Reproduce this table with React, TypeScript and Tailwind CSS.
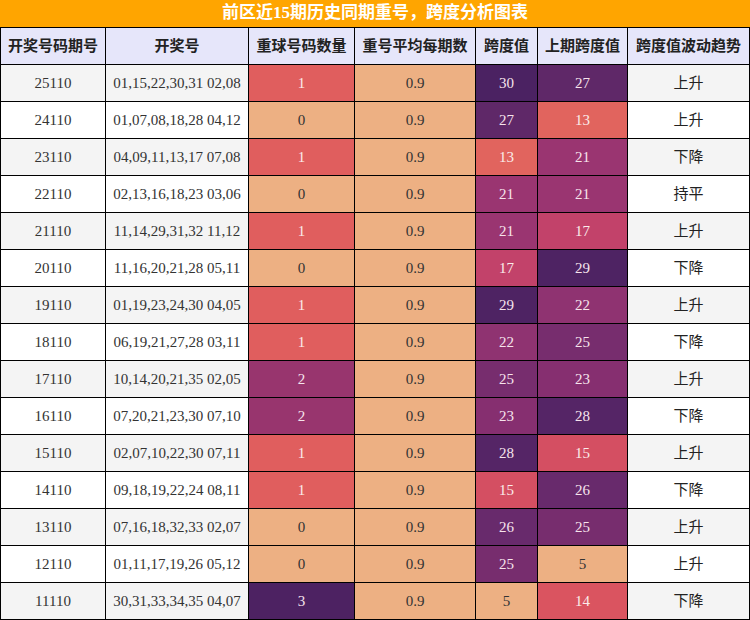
import React from "react";

type Row = {
  issue: string;
  nums: string;
  repeat: number;
  span: number;
  prev: number;
  trend: string;
};

const rows: Row[] = [
  { issue: "25110", nums: "01,15,22,30,31 02,08", repeat: 1, span: 30, prev: 27, trend: "上升" },
  { issue: "24110", nums: "01,07,08,18,28 04,12", repeat: 0, span: 27, prev: 13, trend: "上升" },
  { issue: "23110", nums: "04,09,11,13,17 07,08", repeat: 1, span: 13, prev: 21, trend: "下降" },
  { issue: "22110", nums: "02,13,16,18,23 03,06", repeat: 0, span: 21, prev: 21, trend: "持平" },
  { issue: "21110", nums: "11,14,29,31,32 11,12", repeat: 1, span: 21, prev: 17, trend: "上升" },
  { issue: "20110", nums: "11,16,20,21,28 05,11", repeat: 0, span: 17, prev: 29, trend: "下降" },
  { issue: "19110", nums: "01,19,23,24,30 04,05", repeat: 1, span: 29, prev: 22, trend: "上升" },
  { issue: "18110", nums: "06,19,21,27,28 03,11", repeat: 1, span: 22, prev: 25, trend: "下降" },
  { issue: "17110", nums: "10,14,20,21,35 02,05", repeat: 2, span: 25, prev: 23, trend: "上升" },
  { issue: "16110", nums: "07,20,21,23,30 07,10", repeat: 2, span: 23, prev: 28, trend: "下降" },
  { issue: "15110", nums: "02,07,10,22,30 07,11", repeat: 1, span: 28, prev: 15, trend: "上升" },
  { issue: "14110", nums: "09,18,19,22,24 08,11", repeat: 1, span: 15, prev: 26, trend: "下降" },
  { issue: "13110", nums: "07,16,18,32,33 02,07", repeat: 0, span: 26, prev: 25, trend: "上升" },
  { issue: "12110", nums: "01,11,17,19,26 05,12", repeat: 0, span: 25, prev: 5, trend: "上升" },
  { issue: "11110", nums: "30,31,33,34,35 04,07", repeat: 3, span: 5, prev: 14, trend: "下降" },
];

const peach = "bg-[#edb083] text-[#333]";

const spanColor: Record<number, string> = {
  5: peach,
  13: "bg-[#e1645e] text-[#fbecea]",
  14: "bg-[#da5460] text-[#fbecea]",
  15: "bg-[#d44f62] text-[#fbecea]",
  17: "bg-[#c2426a] text-[#fbecea]",
  21: "bg-[#9a3571] text-[#f6e4ec]",
  22: "bg-[#8f3371] text-[#f6e4ec]",
  23: "bg-[#862f70] text-[#f6e4ec]",
  25: "bg-[#772d6e] text-[#f6e4ec]",
  26: "bg-[#682a6c] text-[#f6e4ec]",
  27: "bg-[#5f2868] text-[#f6e4ec]",
  28: "bg-[#552566] text-[#f6e4ec]",
  29: "bg-[#4e2363] text-[#f6e4ec]",
  30: "bg-[#4b2262] text-[#f6e4ec]",
};

const repeatColor: Record<number, string> = {
  0: peach,
  1: "bg-[#e05e5e] text-[#fbecea]",
  2: "bg-[#98356e] text-[#f6e4ec]",
  3: "bg-[#4d2262] text-[#f6e4ec]",
};

const headers = ["开奖号码期号", "开奖号", "重球号码数量", "重号平均每期数", "跨度值", "上期跨度值", "跨度值波动趋势"];

const cell = "flex items-center justify-center border-b border-r border-black";

export default function App() {
  return (
    <div
      className="w-[750px] h-[620px] overflow-hidden bg-white text-[15px]"
      style={{ fontFamily: '"Liberation Serif", "Noto Sans CJK SC", serif' }}
    >
      <div className="flex h-[28px] items-center justify-center border-b border-black bg-[#ffa500] pb-px text-[17px] font-bold text-white">
        前区近15期历史同期重号，跨度分析图表
      </div>
      <div className="grid grid-cols-[106px_143px_106px_121px_62px_90px_122px]">
        {headers.map((h, i) => (
          <div
            key={h}
            className={`${cell} h-[37px] bg-[#e6e6fa] font-bold text-[#222] ${i === 0 ? "border-l" : ""}`}
          >
            {h}
          </div>
        ))}
        {rows.map((r, idx) => {
          const bg = idx % 2 === 0 ? "bg-[#f4f4f4]" : "bg-white";
          return (
            <React.Fragment key={r.issue}>
              <div className={`${cell} h-[37px] border-l ${bg} text-[#333]`}>{r.issue}</div>
              <div className={`${cell} h-[37px] ${bg} text-[#333]`}>{r.nums}</div>
              <div className={`${cell} h-[37px] ${repeatColor[r.repeat]}`}>{r.repeat}</div>
              <div className={`${cell} h-[37px] ${peach}`}>0.9</div>
              <div className={`${cell} h-[37px] ${spanColor[r.span]}`}>{r.span}</div>
              <div className={`${cell} h-[37px] ${spanColor[r.prev]}`}>{r.prev}</div>
              <div className={`${cell} h-[37px] ${bg} text-[#222]`}>{r.trend}</div>
            </React.Fragment>
          );
        })}
      </div>
    </div>
  );
}
